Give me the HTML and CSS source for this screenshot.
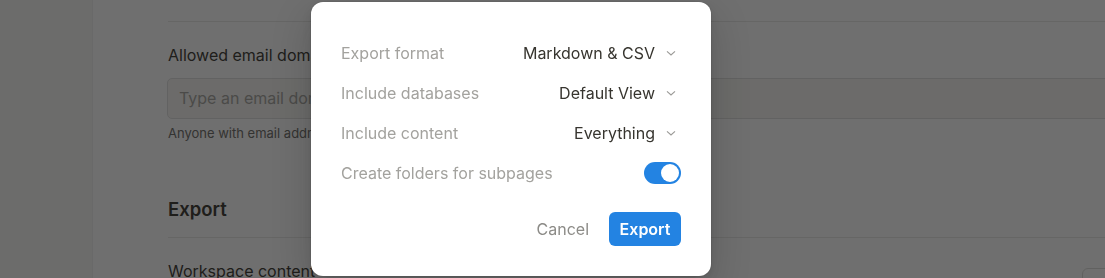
FILE: index.html
```html
<!DOCTYPE html>
<html lang="en">
<head>
<meta charset="utf-8">
<title>Export</title>
<link rel="stylesheet" href="styles.css">
</head>
<body>
<div class="app">
  <aside class="sidebar"></aside>
  <main class="main">
    <div class="content">
      <div class="divider first"></div>
      <div class="field-label">Allowed email domains</div>
      <div class="input">Type an email domain…</div>
      <div class="help">Anyone with email addresses at these domains can automatically join your workspace.</div>
      <h2 class="section-title">Export</h2>
      <div class="divider"></div>
      <div class="setting-row">
        <span class="setting-name">Workspace content</span>
        <span class="ghost-btn"></span>
      </div>
    </div>
  </main>
</div>

<div class="overlay">
  <div class="modal">
    <div class="row">
      <span class="label">Export format</span>
      <span class="select">Markdown &amp; CSV
        <svg class="chev" viewBox="0 0 12 12" width="12" height="12"><path d="M2 4.3 L6 8 L10 4.3" fill="none" stroke="#9b9a97" stroke-width="1.1"/></svg>
      </span>
    </div>
    <div class="row">
      <span class="label">Include databases</span>
      <span class="select">Default View
        <svg class="chev" viewBox="0 0 12 12" width="12" height="12"><path d="M2 4.3 L6 8 L10 4.3" fill="none" stroke="#9b9a97" stroke-width="1.1"/></svg>
      </span>
    </div>
    <div class="row">
      <span class="label">Include content</span>
      <span class="select">Everything
        <svg class="chev" viewBox="0 0 12 12" width="12" height="12"><path d="M2 4.3 L6 8 L10 4.3" fill="none" stroke="#9b9a97" stroke-width="1.1"/></svg>
      </span>
    </div>
    <div class="row">
      <span class="label">Create folders for subpages</span>
      <span class="toggle"><span class="knob"></span></span>
    </div>
    <div class="actions">
      <span class="cancel">Cancel</span>
      <span class="export-btn">Export</span>
    </div>
  </div>
</div>
</body>
</html>
```

FILE: styles.css
```css
* { box-sizing: border-box; }
html, body { margin: 0; padding: 0; }
body {
  width: 1105px;
  height: 278px;
  overflow: hidden;
  font-family: Inter, "Noto Sans", sans-serif;
  color: #37352f;
  background: #ffffff;
}
.app {
  display: flex;
  height: 278px;
}
.sidebar {
  width: 93px;
  flex: none;
  background: #f7f7f5;
  border-right: 1px solid #f1f1ef;
}
.main {
  flex: 1;
  overflow: hidden;
  padding-left: 75px;
}
.content {
  width: 1100px;
}
.divider {
  height: 1px;
  background: #e9e9e7;
}
.divider.first { margin-top: 21px; }
.field-label {
  margin-top: 22px;
  font-size: 16px;
  line-height: 22px;
}
.input {
  margin-top: 12px;
  margin-left: -1px;
  height: 41px;
  border: 1px solid #dfdfde;
  border-radius: 5px;
  background: #f7f6f3;
  padding: 0 11px;
  font-size: 16px;
  line-height: 39px;
  color: #a5a49f;
}
.help {
  margin-top: 5px;
  font-size: 13px;
  line-height: 18px;
  color: #6b6a66;
  white-space: nowrap;
}
.section-title {
  margin: 55px 0 0;
  font-size: 18.5px;
  font-weight: 600;
  line-height: 24px;
}
.section-title + .divider { margin-top: 16px; }
.setting-row {
  display: flex;
  justify-content: space-between;
  align-items: flex-start;
  margin-top: 22px;
  width: 1014px;
}
.setting-name {
  font-size: 16px;
  line-height: 22px;
}
.ghost-btn {
  margin-top: 8px;
  border: 1px solid #dcdcda;
  border-radius: 6px;
  height: 32px;
  width: 100px;
}

.overlay {
  position: fixed;
  inset: 0;
  background: rgba(15, 15, 15, 0.6);
}
.modal {
  position: absolute;
  left: 311px;
  top: 2px;
  width: 400px;
  height: 274px;
  background: #ffffff;
  border-radius: 12px;
  padding: 31px 30px 30px;
  box-shadow: rgba(15, 15, 15, 0.05) 0 0 0 1px, rgba(15, 15, 15, 0.1) 0 5px 10px, rgba(15, 15, 15, 0.2) 0 15px 40px;
  display: flex;
  flex-direction: column;
}
.row {
  display: flex;
  align-items: center;
  justify-content: space-between;
  height: 40px;
}
.label {
  font-size: 16px;
  color: #a3a29e;
}
.select {
  display: flex;
  align-items: center;
  gap: 10px;
  font-size: 16px;
  color: #37352f;
  margin-right: 4px;
}
.chev { display: block; }
.toggle {
  width: 37px;
  height: 22px;
  border-radius: 11px;
  background: #2383e2;
  padding: 2px;
  display: flex;
  justify-content: flex-end;
}
.knob {
  width: 18px;
  height: 18px;
  border-radius: 50%;
  background: #ffffff;
}
.actions {
  margin-top: 19px;
  display: flex;
  justify-content: flex-end;
  align-items: center;
  gap: 20px;
}
.cancel {
  font-size: 16px;
  color: #8c8b87;
}
.export-btn {
  width: 72px;
  height: 34px;
  border-radius: 6px;
  background: #2383e2;
  color: #ffffff;
  font-size: 16px;
  font-weight: 600;
  display: flex;
  align-items: center;
  justify-content: center;
}
```
